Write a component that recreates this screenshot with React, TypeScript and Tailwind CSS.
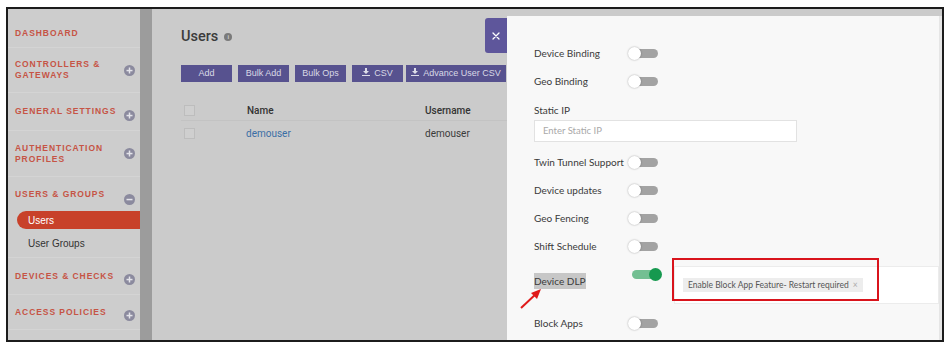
import React from "react";

const PlusIcon = ({ minus = false }: { minus?: boolean }) => (
  <svg width="11" height="11" viewBox="0 0 11 11">
    <circle cx="5.5" cy="5.5" r="5.5" fill="#8b8a9e" />
    <rect x="2.5" y="4.8" width="6" height="1.5" fill="#e4e4ea" />
    {!minus && <rect x="4.75" y="2.5" width="1.5" height="6" fill="#e4e4ea" />}
  </svg>
);

const Heading = ({ lines, h, icon = true, minus = false, iconOffset = 0 }: { lines: string[]; h: number; icon?: boolean; minus?: boolean; iconOffset?: number }) => (
  <div className="flex items-center justify-between border-b border-[#d4d4d4] pl-[7px] pr-[5px]" style={{ height: h }}>
    <div className="text-[8.5px] font-bold tracking-[0.11em] text-[#c65445] leading-[11px]" style={{ fontFamily: '"Liberation Sans", Arial, sans-serif' }}>
      {lines.map((l) => (
        <div key={l}>{l}</div>
      ))}
    </div>
    {icon && (
      <div style={{ marginTop: iconOffset }}>
        <PlusIcon minus={minus} />
      </div>
    )}
  </div>
);

const Toggle = ({ on = false }: { on?: boolean }) =>
  on ? (
    <div className="relative w-[30px] h-[13px] flex items-center ml-[4px]">
      <div className="w-[26px] h-[9px] rounded-full bg-[#73bf92]" />
      <div className="absolute right-0 top-0 w-[13px] h-[13px] rounded-full bg-[#16994f]" />
    </div>
  ) : (
    <div className="relative w-[30px] h-[13px] flex items-center">
      <div className="ml-[3px] w-[27px] h-[9px] rounded-full bg-[#a3a3a3]" />
      <div className="absolute left-0 top-0 w-[13px] h-[13px] rounded-full bg-white shadow-[0_0_2px_rgba(0,0,0,0.35)]" />
    </div>
  );

const Row = ({ label, h = 28, children }: { label: string; h?: number; children?: React.ReactNode }) => (
  <div className="flex items-center" style={{ height: h }}>
    <div className="w-[94px] text-[10px] text-[#3a3a3a]">{label}</div>
    {children ?? <Toggle />}
  </div>
);

const Download = () => (
  <svg width="8" height="8" viewBox="0 0 8 8" className="inline-block mr-[4px] -mt-[2px]">
    <path d="M3 0h2v3h2L4 6 1 3h2z" fill="#dcdce8" />
    <rect x="0" y="7" width="8" height="1" fill="#dcdce8" />
  </svg>
);

export default function App() {
  return (
    <div className="w-[949px] h-[346px] bg-white overflow-hidden">
      <div className="ml-[6px] mt-[7px] w-[938px] h-[335px] border-2 border-[#1c1c1c] flex">
        {/* Sidebar */}
        <div className="w-[132px] h-full bg-[#cdcdcd] pt-[10px]">
          <Heading lines={["DASHBOARD"]} h={29} icon={false} />
          <Heading lines={["CONTROLLERS &", "GATEWAYS"]} h={45} />
          <Heading lines={["GENERAL SETTINGS"]} h={38} iconOffset={7} />
          <Heading lines={["AUTHENTICATION", "PROFILES"]} h={46} />
          <div className="border-b border-[#d4d4d4] h-[81px] pt-[12px]">
            <div className="flex items-start justify-between pl-[7px] pr-[5px]">
              <div className="text-[8.5px] font-bold tracking-[0.11em] text-[#c65445] leading-[11px]" style={{ fontFamily: '"Liberation Sans", Arial, sans-serif' }}>
                USERS &amp; GROUPS
              </div>
              <div className="mt-[5px]">
                <PlusIcon minus />
              </div>
            </div>
            <div className="mt-[6px] ml-[9px] h-[18px] rounded-l-full bg-[#c8412a] flex items-center pl-[11px] text-[10px] text-white" style={{ fontFamily: '"Liberation Sans", Arial, sans-serif' }}>
              Users
            </div>
            <div className="mt-[7px] pl-[20px] text-[10px] text-[#333]" style={{ fontFamily: '"Liberation Sans", Arial, sans-serif' }}>
              User Groups
            </div>
          </div>
          <Heading lines={["DEVICES & CHECKS"]} h={37} iconOffset={7} />
          <Heading lines={["ACCESS POLICIES"]} h={35} iconOffset={7} />
        </div>
        <div className="w-[12px] h-full bg-[#9c9c9c]" />
        {/* Main */}
        <div className="relative flex-1 h-full bg-[#cbcbcb]" style={{ fontFamily: 'Roboto, "Liberation Sans", sans-serif' }}>
          <div className="pl-[29px] pt-[17px]">
            <div className="flex items-center gap-[6px]">
              <span className="text-[14.5px] font-medium text-[#3b3b3b]">Users</span>
              <span className="w-[8px] h-[8px] rounded-full bg-[#7a7a7a] text-[6px] text-[#cbcbcb] flex items-center justify-center font-bold">i</span>
            </div>
            <div className="flex gap-[6px] mt-[17px] text-[9px] text-[#d9d9e6]" style={{ fontFamily: '"Liberation Sans", Arial, sans-serif' }}>
              <div className="w-[51px] h-[17px] bg-[#57528f] flex items-center justify-center">Add</div>
              <div className="w-[51px] h-[17px] bg-[#57528f] flex items-center justify-center">Bulk Add</div>
              <div className="w-[51px] h-[17px] bg-[#57528f] flex items-center justify-center">Bulk Ops</div>
              <div className="w-[51px] h-[17px] bg-[#57528f] flex items-center justify-center"><Download />CSV</div>
              <div className="w-[100px] h-[17px] bg-[#57528f] flex items-center justify-center -ml-[3px] whitespace-nowrap"><Download />Advance User CSV</div>
            </div>
            <div className="mt-[19px] w-[330px] text-[10px]">
              <div className="flex items-center h-[20px] border-b border-[#c3c3c3]">
                <div className="ml-[3px] w-[11px] h-[11px] border border-[#bdbdbd] bg-[#cfcfcf]" />
                <div className="ml-[52px] w-[178px] font-medium text-[#333]">Name</div>
                <div className="font-medium text-[#333]">Username</div>
              </div>
              <div className="flex items-center h-[26px]">
                <div className="ml-[3px] w-[11px] h-[11px] border border-[#bdbdbd] bg-[#cfcfcf]" />
                <div className="ml-[51px] w-[179px] text-[#3a6ea5]">demouser</div>
                <div className="text-[#3a3a3a]">demouser</div>
              </div>
            </div>
          </div>

          {/* Close button */}
          <div className="absolute left-[333px] top-[9px] w-[22px] h-[35px] bg-[#5e569b] rounded-l-[3px] flex items-center justify-center">
            <svg width="8" height="8" viewBox="0 0 8 8">
              <path d="M1 1L7 7M7 1L1 7" stroke="#ffffff" strokeWidth="1.3" strokeLinecap="round" />
            </svg>
          </div>

          {/* Drawer */}
          <div className="absolute left-[355px] top-[7px] right-0 bottom-0 bg-[#f8f8f8] border-r-[3px] border-[#e6e6e6] pl-[27px] pt-[23px]" style={{ fontFamily: 'Lato, "Noto Sans", sans-serif' }}>
            <Row label="Device Binding" />
            <Row label="Geo Binding" />
            <div className="mt-[8px] text-[10px] text-[#3a3a3a] leading-[14px]">Static IP</div>
            <div className="mt-[3px] w-[263px] h-[22px] bg-white border border-[#e2e2e2] flex items-center pl-[8px] text-[9.5px] text-[#a9a9a9]">
              Enter Static IP
            </div>
            <div className="mt-[6px]">
              <Row label="Twin Tunnel Support" />
              <Row label="Device updates" />
              <Row label="Geo Fencing" />
              <Row label="Shift Schedule" />
            </div>
            <div className="flex items-start h-[49px]">
              <div className="w-[94px] pt-[7px]">
                <span className="bg-[#c7c7c7] text-[10px] text-[#3a3a3a] px-0 py-[2px]">Device DLP</span>
              </div>
              <div className="pt-[8px]">
                <Toggle on />
              </div>
              <div className="ml-[12px] mt-[6px] flex-1 h-[38px] bg-white border border-[#ececec] pl-[8px] pt-[3px]">
                <div className="inline-flex items-center h-[14px] bg-[#ededed] px-[5px] text-[8.5px] text-[#555]">
                  Enable Block App Feature- Restart required
                  <span className="ml-[4px] text-[#aaa]">×</span>
                </div>
              </div>
            </div>
            <Row label="Block Apps" />
          </div>

          {/* Annotation: red box */}
          <div className="absolute left-[520px] top-[249px] w-[207px] h-[43px] border-[2px] border-[#d9141c]" />
          {/* Annotation: arrow */}
          <svg className="absolute left-[366px] top-[277px]" width="26" height="26" viewBox="0 0 26 26">
            <line x1="3" y1="22" x2="19" y2="7" stroke="#e01a1a" strokeWidth="2" />
            <polygon points="23,3 13,7 19,13" fill="#e01a1a" />
          </svg>
        </div>
      </div>
    </div>
  );
}
